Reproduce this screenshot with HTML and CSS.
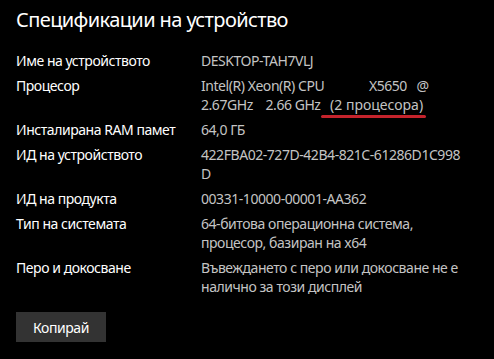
FILE: index.html
```html
<!DOCTYPE html>
<html lang="bg">
<head>
<meta charset="utf-8">
<link rel="stylesheet" href="styles.css">
</head>
<body>
<main class="panel">
  <h1 class="title">Спецификации на устройство</h1>
  <dl class="specs">
    <dt class="label">Име на устройството</dt>
    <dd class="value">DESKTOP-TAH7VLJ</dd>
    <dt class="label">Процесор</dt>
    <dd class="value"><span class="pre">Intel(R) Xeon(R) CPU              X5650   @</span><br><span class="pre">2.67GHz    2.66 GHz   </span><span class="marked">(2 процесора)<span class="mark"></span></span></dd>
    <dt class="label">Инсталирана RAM памет</dt>
    <dd class="value">64,0 ГБ</dd>
    <dt class="label">ИД на устройството</dt>
    <dd class="value">422FBA02-727D-42B4-821C-61286D1C998<br>D</dd>
    <dt class="label">ИД на продукта</dt>
    <dd class="value">00331-10000-00001-AA362</dd>
    <dt class="label">Тип на системата</dt>
    <dd class="value">64-битова операционна система,<br>процесор, базиран на x64</dd>
    <dt class="label">Перо и докосване</dt>
    <dd class="value">Въвеждането с перо или докосване не е<br>налично за този дисплей</dd>
  </dl>
  <button class="copy">Копирай</button>
</main>
</body>
</html>
```
FILE: styles.css
```css
html, body {
  margin: 0;
  padding: 0;
  background: #000;
}
body {
  font-family: "Noto Sans", "Open Sans", sans-serif;
  color: #fff;
  width: 494px;
  height: 359px;
  overflow: hidden;
}
.panel {
  padding: 4px 16px 0 16px;
}
.title {
  margin: 0;
  font-size: 20px;
  font-weight: 400;
  line-height: 32px;
  letter-spacing: -0.6px;
  color: #fff;
}
.specs {
  margin: 15px 0 0 0;
  display: grid;
  grid-template-columns: 185px auto;
  row-gap: 6px;
  font-size: 14px;
  line-height: 19px;
  letter-spacing: -0.45px;
}
.label {
  margin: 0;
  color: #fff;
}
.value {
  margin: 0;
  color: #c4c4c4;
  white-space: nowrap;
}
.pre {
  white-space: pre;
}
.marked {
  position: relative;
  letter-spacing: 0;
}
.mark {
  position: absolute;
  left: -9px;
  right: -3px;
  bottom: -4px;
  height: 3px;
  background: #c4232c;
  border-radius: 2px;
}
.copy {
  margin-top: 16px;
  width: 90px;
  height: 30px;
  border: 0;
  padding: 0;
  background: #333;
  color: #fff;
  font-family: inherit;
  font-size: 14px;
  letter-spacing: -0.45px;
}
```
